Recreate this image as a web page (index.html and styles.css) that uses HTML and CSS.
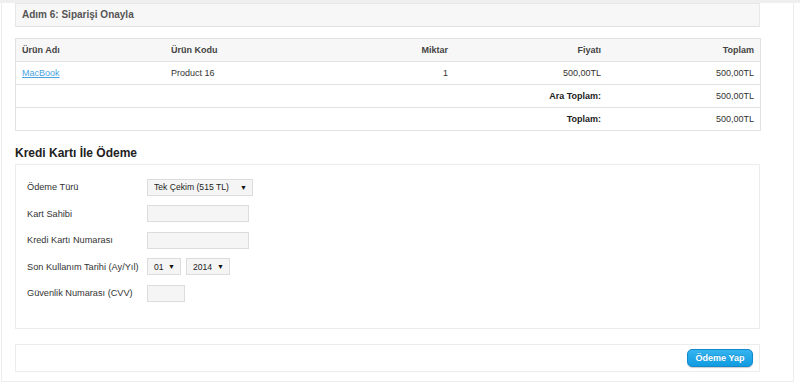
FILE: index.html
```html
<!DOCTYPE html>
<html lang="tr">
<head>
  <meta charset="UTF-8">
  <meta name="viewport" content="width=device-width, initial-scale=1.0">
  <title>Adım 6: Siparişi Onayla</title>
  <link rel="stylesheet" href="styles.css">
</head>
<body>
  <div class="shell">
    <div class="page">
      <div class="step-title">Adım 6: Siparişi Onayla</div>

      <table class="cart">
        <thead>
          <tr>
            <th class="c1">Ürün Adı</th>
            <th class="c2">Ürün Kodu</th>
            <th class="c3 right">Miktar</th>
            <th class="c4 right">Fiyatı</th>
            <th class="c5 right">Toplam</th>
          </tr>
        </thead>
        <tbody>
          <tr>
            <td><a href="#">MacBook</a></td>
            <td>Product 16</td>
            <td class="right">1</td>
            <td class="right">500,00TL</td>
            <td class="right">500,00TL</td>
          </tr>
          <tr>
            <td colspan="4" class="right"><b>Ara Toplam:</b></td>
            <td class="right">500,00TL</td>
          </tr>
          <tr>
            <td colspan="4" class="right"><b>Toplam:</b></td>
            <td class="right">500,00TL</td>
          </tr>
        </tbody>
      </table>

      <h2>Kredi Kartı İle Ödeme</h2>

      <div class="payment">
        <div class="form-row">
          <label>Ödeme Türü</label>
          <span class="select wide"><select><option>Tek Çekim (515 TL)</option></select><i>&#9660;</i></span>
        </div>
        <div class="form-row">
          <label>Kart Sahibi</label>
          <input type="text" class="text">
        </div>
        <div class="form-row">
          <label>Kredi Kartı Numarası</label>
          <input type="text" class="text">
        </div>
        <div class="form-row">
          <label>Son Kullanım Tarihi (Ay/Yıl)</label>
          <span class="select month"><select><option>01</option></select><i>&#9660;</i></span>
          <span class="select year"><select><option>2014</option></select><i>&#9660;</i></span>
        </div>
        <div class="form-row">
          <label>Güvenlik Numarası (CVV)</label>
          <input type="text" class="text cvv">
        </div>
      </div>

      <div class="actions">
        <button class="pay">Ödeme Yap</button>
      </div>
    </div>
  </div>
</body>
</html>
```

FILE: styles.css
```css
body {
  font-family: Arial, "Liberation Sans", sans-serif;
  font-size: 9px;
  color: #333;
  margin: 0;
  padding: 0;
  background: #fff;
}
.shell {
  border-top: 3px solid #efefef;
}
.page {
  box-sizing: border-box;
  width: 793px;
  margin-left: 1px;
  padding: 0 33px 9px 13px;
  border: 1px solid #ececec;
  border-top: 0;
}
.step-title {
  box-sizing: border-box;
  height: 24px;
  line-height: 22px;
  padding-left: 6px;
  background-color: #f7f7f7;
  border: 1px solid #e8e8e8;
  border-bottom-color: #e2e2e2;
  font-size: 10px;
  font-weight: bold;
  color: #555;
}
.cart {
  width: 100%;
  table-layout: fixed;
  margin-top: 11px;
  border-collapse: collapse;
  border: 1px solid #e2e2e2;
}
.cart th,
.cart td {
  height: 22px;
  padding: 0 6px;
  border-top: 1px solid #e2e2e2;
  text-align: left;
  font-size: 9px;
}
.cart th {
  background-color: #f7f7f7;
  color: #444;
}
.cart .c1 { width: 137px; }
.cart .c2 { width: 137px; }
.cart .c3 { width: 128px; }
.cart .c4 { width: 141px; }
.cart .c5 { width: 141px; }
.cart .right { text-align: right; }
.cart a {
  color: #4aa3df;
}
.cart b {
  color: #222;
}
h2 {
  margin: 14px 0 3px;
  font-size: 12px;
  line-height: 16px;
  color: #222;
}
.payment {
  height: 165px;
  box-sizing: border-box;
  padding: 9px 11px 0;
  border: 1px solid #ececec;
}
.form-row {
  display: flex;
  align-items: center;
  height: 26.5px;
}
.form-row label {
  width: 120px;
  flex-shrink: 0;
  font-size: 9.2px;
  color: #333;
}
.text {
  box-sizing: border-box;
  width: 102px;
  height: 17px;
  margin: 0;
  padding: 0 4px;
  background-color: #f5f5f5;
  border: 1px solid #dcdcdc;
}
.text.cvv {
  width: 38px;
}
.select {
  display: inline-flex;
  align-items: center;
  box-sizing: border-box;
  height: 17px;
  padding: 0 5px 0 6px;
  background-color: #f5f5f5;
  border: 1px solid #dcdcdc;
  margin-right: 5px;
}
.select select {
  appearance: none;
  -webkit-appearance: none;
  border: 0;
  padding: 0;
  margin: 0;
  background: transparent;
  font-family: inherit;
  font-size: 8.6px;
  color: #222;
  flex: 1;
}
.select i {
  font-style: normal;
  font-size: 7px;
  color: #111;
}
.select.wide { width: 106px; }
.select.month { width: 34px; }
.select.year { width: 44px; }
.actions {
  display: flex;
  justify-content: flex-end;
  align-items: center;
  box-sizing: border-box;
  height: 28px;
  margin-top: 15px;
  padding-right: 6px;
  border: 1px solid #ececec;
}
.pay {
  width: 66px;
  height: 18px;
  padding: 0;
  border: 1px solid #1187cc;
  border-radius: 5px;
  background: linear-gradient(#35b4f0, #119be0);
  box-shadow: 0 1px 1px rgba(0, 0, 0, 0.2);
  color: #fff;
  font-family: inherit;
  font-size: 9px;
  font-weight: bold;
  text-shadow: 0 -1px 0 rgba(0, 0, 0, 0.15);
}
```
